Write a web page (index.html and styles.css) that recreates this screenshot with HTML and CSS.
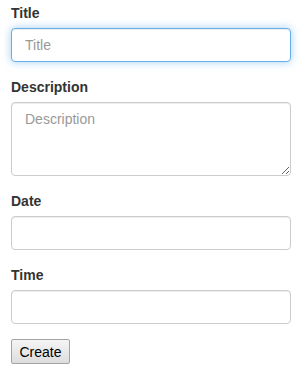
FILE: index.html
```html
<!DOCTYPE html>
<html>
<head>
<meta charset="utf-8">
<link rel="stylesheet" href="styles.css">
</head>
<body>
<form class="form">
  <div class="form-group">
    <label class="label" for="title">Title</label>
    <input class="control is-focus" id="title" type="text" placeholder="Title" autofocus>
  </div>
  <div class="form-group">
    <label class="label" for="desc">Description</label>
    <textarea class="control area" id="desc" rows="3" placeholder="Description"></textarea>
  </div>
  <div class="form-group">
    <label class="label" for="date">Date</label>
    <input class="control" id="date" type="text">
  </div>
  <div class="form-group">
    <label class="label" for="time">Time</label>
    <input class="control" id="time" type="text">
  </div>
  <button class="btn" type="button">Create</button>
</form>
</body>
</html>
```
FILE: styles.css
```css
html, body {
  margin: 0;
  background: #fff;
}
body {
  padding: 3px 17px 0 11px;
  font-family: "Liberation Sans", Arial, sans-serif;
  font-size: 14px;
  line-height: 20px;
  color: #333;
}
.form {
  display: block;
}
.form-group {
  margin-bottom: 15px;
}
.label {
  display: inline-block;
  margin-bottom: 5px;
  font-weight: bold;
}
.control {
  display: block;
  box-sizing: border-box;
  width: 100%;
  height: 34px;
  margin: 0;
  padding: 6px 12px 6px 13px;
  font-family: inherit;
  font-size: 14px;
  line-height: 20px;
  color: #555;
  background: #fff;
  border: 1px solid #ccc;
  border-radius: 4px;
  box-shadow: inset 0 1px 1px rgba(0,0,0,.075);
  outline: none;
}
.control::placeholder {
  color: #999;
  opacity: 1;
}
.control.is-focus,
.control:focus {
  border-color: #66afe9;
  box-shadow: inset 0 1px 1px rgba(0,0,0,.075), 0 0 8px rgba(102,175,233,.6);
}
.area {
  height: 74px;
  resize: vertical;
}
.btn {
  display: inline-block;
  box-sizing: border-box;
  width: 59px;
  height: 25px;
  margin: 0;
  padding: 1px 0 0;
  text-align: center;
  font-family: "Liberation Sans", Arial, sans-serif;
  font-size: 14px;
  line-height: 20px;
  color: #000;
  background: linear-gradient(#f5f5f5, #dddddd);
  border: 1px solid #a3a3a3;
  border-radius: 2px;
}
```
